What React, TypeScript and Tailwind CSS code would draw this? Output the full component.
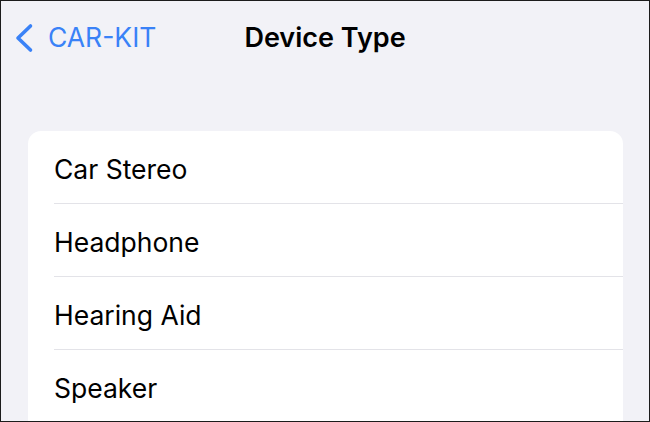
import React from 'react';

const deviceTypes = ['Car Stereo', 'Headphone', 'Hearing Aid', 'Speaker'];

const BackChevron: React.FC = () => (
  <svg width="20" height="30" viewBox="0 0 20 30" fill="none" className="shrink-0">
    <path
      d="M16.5 3 L4 15 L16.5 27"
      stroke="#3a82f7"
      strokeWidth="3.6"
      strokeLinecap="round"
      strokeLinejoin="round"
    />
  </svg>
);

const App: React.FC = () => {
  return (
    <div
      className="w-[650px] h-[422px] overflow-hidden border border-[#1c1c1c] bg-[#f2f2f7] text-black"
      style={{ fontFamily: 'Inter, "Liberation Sans", Arial, sans-serif' }}
    >
      {/* Navigation bar */}
      <div className="grid grid-cols-[1fr_auto_1fr] items-center h-[73px]">
        <div className="flex items-center gap-[14px] pl-[13px] text-[#3a82f7]">
          <BackChevron />
          <span className="text-[26.5px] leading-none">CAR-KIT</span>
        </div>
        <h1 className="text-[27px] font-semibold leading-none">Device Type</h1>
        <div />
      </div>

      {/* List of options */}
      <div className="mt-[57px] ml-[27px] mr-[26px] bg-white rounded-t-[13px]">
        {deviceTypes.map((type, i) => (
          <div key={type} className="pl-[26px]">
            <div
              className={`flex items-center h-[73px] pt-[5px] text-[26.5px] ${
                i < deviceTypes.length - 1 ? 'border-b border-[#e3e3e8]' : ''
              }`}
            >
              {type}
            </div>
          </div>
        ))}
      </div>
    </div>
  );
};

export default App;
